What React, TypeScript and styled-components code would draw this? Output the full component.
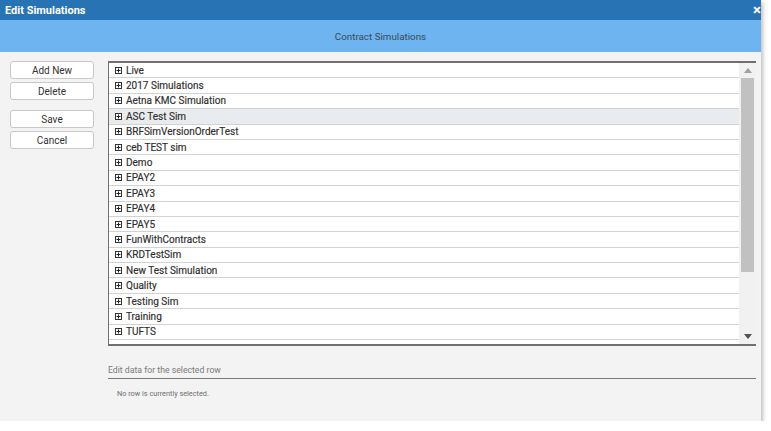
import styled, { createGlobalStyle } from "styled-components";

const GlobalStyle = createGlobalStyle`
  html, body {
    margin: 0;
    padding: 0;
    background: #ffffff;
    font-family: Roboto, "Liberation Sans", Arial, sans-serif;
  }
`;

const Dialog = styled.div`
  width: 761px;
  height: 421px;
  background: #f3f3f3;
  box-shadow: 2px 2px 4px rgba(0, 0, 0, 0.25);
  display: flex;
  flex-direction: column;
`;

const TitleBar = styled.div`
  height: 20px;
  background: #2873b3;
  color: #fff;
  display: flex;
  align-items: center;
  justify-content: space-between;
  padding: 0 0 0 5px;
  font-size: 11px;
  font-weight: 700;
`;

const Close = styled.span`
  font-size: 15px;
  font-weight: 700;
  line-height: 1;
`;

const SubHeader = styled.div`
  height: 32px;
  background: #6db4f0;
  color: #3d4a55;
  font-size: 9.8px;
  display: flex;
  align-items: center;
  justify-content: center;
`;

const Body = styled.div`
  display: flex;
  padding: 9px 5px 0 10px;
  gap: 14px;
`;

const Buttons = styled.div`
  width: 84px;
  display: flex;
  flex-direction: column;
`;

const Button = styled.button<{ $gap?: number }>`
  height: 18px;
  margin-top: ${(p) => p.$gap ?? 0}px;
  background: #fff;
  border: 1px solid #c8c8c8;
  border-radius: 3px;
  font-family: inherit;
  font-size: 10px;
  color: #333;
  padding: 0;
`;

const Main = styled.div`
  flex: 1;
  display: flex;
  flex-direction: column;
`;

const Grid = styled.div`
  height: 281px;
  display: flex;
  border-top: 2px solid #707070;
  border-left: 1px solid #707070;
  border-bottom: 2px solid #707070;
`;

const Rows = styled.div`
  flex: 1;
  background: #fff;
  overflow: hidden;
`;

const Row = styled.div<{ $selected?: boolean }>`
  height: 14.4px;
  border-bottom: 1px solid #d2d2d2;
  background: ${(p) => (p.$selected ? "#e9ecef" : "#fff")};
  display: flex;
  align-items: center;
  padding-left: 6px;
  gap: 4px;
  font-size: 10px;
  color: #2e2e2e;
  -webkit-text-stroke: 0.15px #2e2e2e;
`;

const Scrollbar = styled.div`
  width: 17px;
  background: #f1f1f1;
  display: flex;
  flex-direction: column;
  align-items: center;
`;

const Arrow = styled.div`
  height: 15px;
  display: flex;
  align-items: center;
  justify-content: center;
`;

const Thumb = styled.div`
  width: 13px;
  height: 194px;
  background: #c1c1c1;
`;

const Spacer = styled.div`
  flex: 1;
`;

const EditLabel = styled.div`
  margin-top: 19px;
  padding-bottom: 3px;
  border-bottom: 1px solid #7a7a7a;
  color: #7a7a7a;
  font-size: 8.7px;
`;

const Note = styled.div`
  margin-top: 10px;
  padding-left: 9px;
  color: #6e6e6e;
  font-size: 7.3px;
`;

const Expander = () => (
  <svg width="7" height="7" viewBox="0 0 7 7">
    <rect x="0.5" y="0.5" width="6" height="6" fill="#fff" stroke="#333" strokeWidth="1" />
    <path d="M1.5 3.5H5.5M3.5 1.5V5.5" stroke="#222" strokeWidth="1" />
  </svg>
);

const items = [
  "Live",
  "2017 Simulations",
  "Aetna KMC Simulation",
  "ASC Test Sim",
  "BRFSimVersionOrderTest",
  "ceb TEST sim",
  "Demo",
  "EPAY2",
  "EPAY3",
  "EPAY4",
  "EPAY5",
  "FunWithContracts",
  "KRDTestSim",
  "New Test Simulation",
  "Quality",
  "Testing Sim",
  "Training",
  "TUFTS",
];

export default function App() {
  return (
    <>
      <GlobalStyle />
      <Dialog>
        <TitleBar>
          <span>Edit Simulations</span>
          <Close>×</Close>
        </TitleBar>
        <SubHeader>Contract Simulations</SubHeader>
        <Body>
          <Buttons>
            <Button>Add New</Button>
            <Button $gap={3}>Delete</Button>
            <Button $gap={10}>Save</Button>
            <Button $gap={3}>Cancel</Button>
          </Buttons>
          <Main>
            <Grid>
              <Rows>
                {items.map((name) => (
                  <Row key={name} $selected={name === "ASC Test Sim"}>
                    <Expander />
                    <span>{name}</span>
                  </Row>
                ))}
              </Rows>
              <Scrollbar>
                <Arrow>
                  <svg width="8" height="5" viewBox="0 0 8 5">
                    <path d="M4 0L8 5H0Z" fill="#a0a0a0" />
                  </svg>
                </Arrow>
                <Thumb />
                <Spacer />
                <Arrow>
                  <svg width="8" height="5" viewBox="0 0 8 5">
                    <path d="M0 0H8L4 5Z" fill="#505050" />
                  </svg>
                </Arrow>
              </Scrollbar>
            </Grid>
            <EditLabel>Edit data for the selected row</EditLabel>
            <Note>No row is currently selected.</Note>
          </Main>
        </Body>
      </Dialog>
    </>
  );
}
